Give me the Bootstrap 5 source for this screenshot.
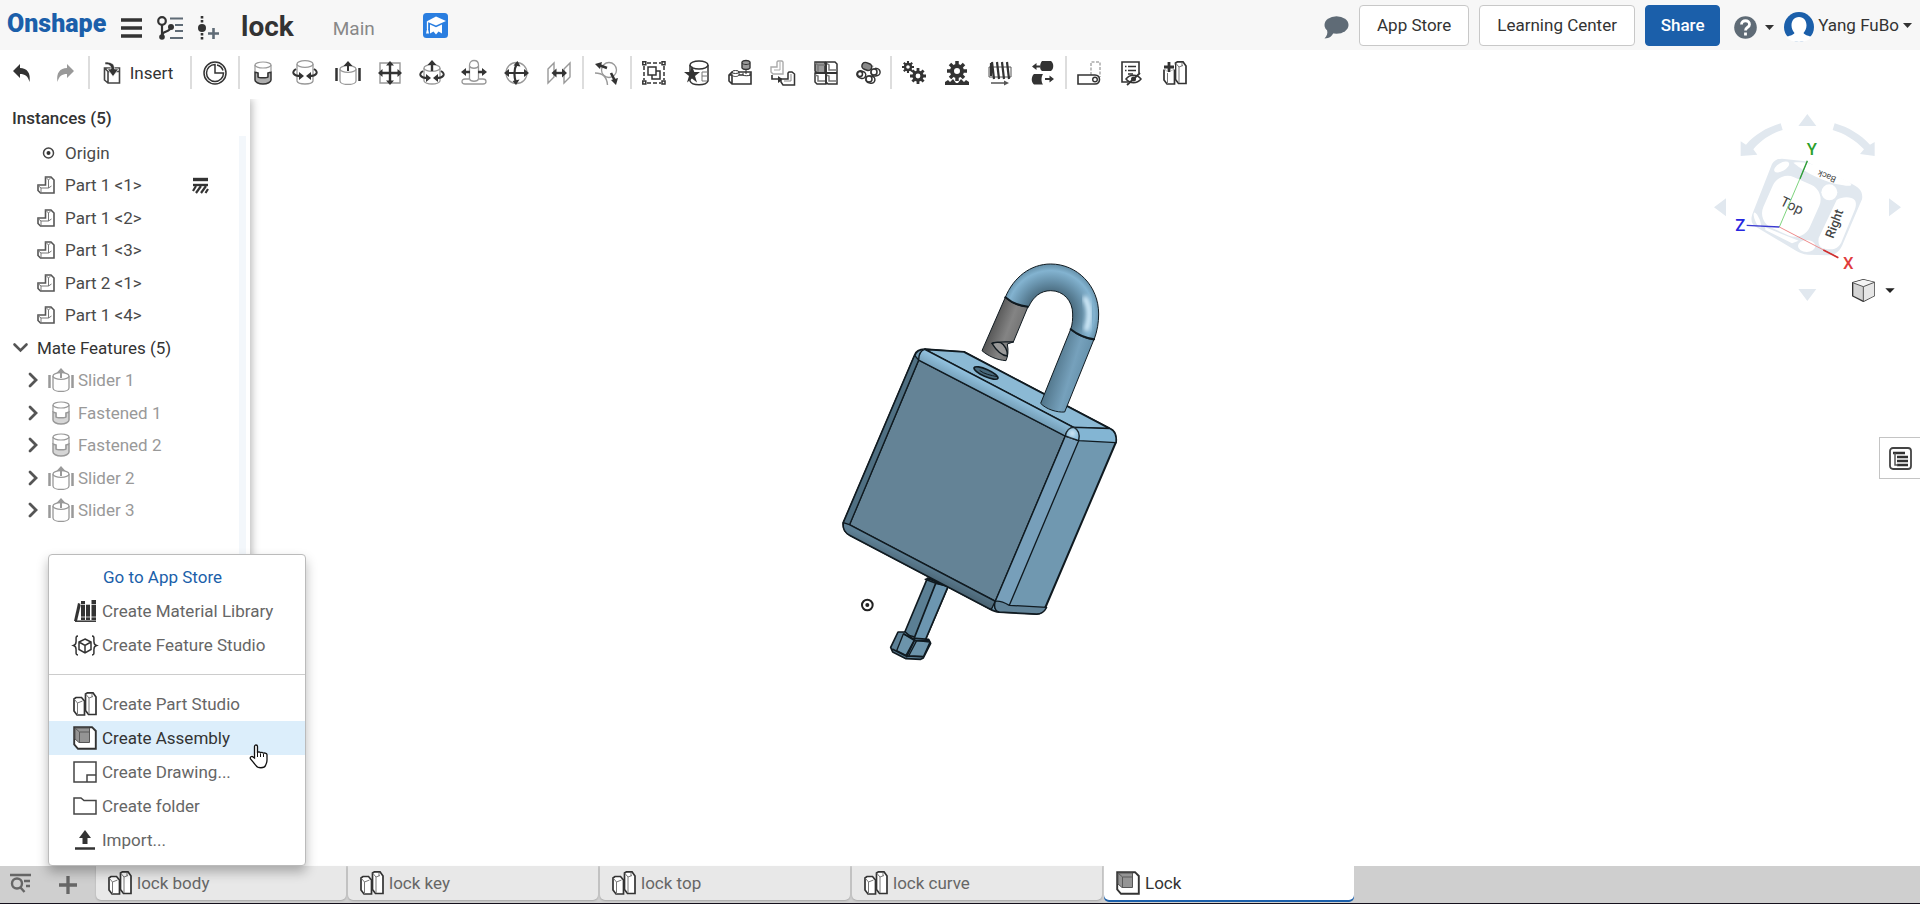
<!DOCTYPE html>
<html lang="en">
<head>
<meta charset="utf-8">
<meta name="viewport" content="width=device-width, initial-scale=1">
<title>lock | Main</title>
<link href="https://cdn.jsdelivr.net/npm/bootstrap@5.3.0/dist/css/bootstrap.min.css" rel="stylesheet">
<style>
  :root { --ink: #333; --steel: #5f6b76; --brand: #1b5faa; --rule: #ddd; }
  body { font-family: Roboto, "Liberation Sans", sans-serif; font-size: 17px; line-height: 24px; color: var(--ink); }
  svg { display: block; flex: none; overflow: visible; }
  button { color: inherit; }
  .plain { border: 0; background: none; padding: 0; }
  .topbar { background: #f7f7f7; height: 50px; padding-left: 7px; }
  .brand { color: var(--brand); font-weight: 900; font-size: 25px; width: 99px; }
  .top-icons { gap: 15px; margin: 0 22px 0 15px; padding-top: 5px; }
  .doc-title { font-size: 28px; font-weight: 700; }
  .doc-branch { font-size: 19px; color: #888; margin-left: 39px; }
  .top-actions { gap: 10px; }
  .top-btn { height: 41px; border: 1px solid #c8c8c8; border-radius: 4px; background: #fff; padding: 0; }
  .top-btn.store { width: 110px; }
  .top-btn.learn { width: 156px; }
  .top-btn.share { width: 75px; background: var(--brand); border-color: var(--brand); color: #fff; font-weight: 500; }
  .tools { height: 49px; padding-bottom: 4px; }
  .tools .split { width: 2px; height: 33px; background: var(--rule); }
  .tool-group { display: flex; }
  .tool-group button { flex: 1; display: flex; justify-content: center; align-items: center; height: 40px; }
  .w-history { width: 88px; } .w-insert { width: 100px; padding-right: 4px; } .w-one { width: 46px; }
  .w-mates { width: 342px; padding: 0 2px; } .w-copies { width: 258px; } .w-relations { width: 173px; } .w-views { width: 130px; }
  .side { width: 250px; background: #fff; box-shadow: 2px 0 8px rgba(0,0,0,.28); clip-path: inset(0 -12px 0 0); z-index: 1; }
  .side-head { font-weight: 500; padding: 6px 12px 0; height: 37px; line-height: 26px; }
  .tree { width: 239px; margin: 0; padding: 0; list-style: none; }
  .tree li { height: 33px; display: flex; align-items: center; color: #4a4a4a; }
  .tree li:nth-child(even) { height: 32px; }
  .tree .leaf { padding-left: 37px; gap: 10px; }
  .tree .pin-mark { margin: 0 31px 0 auto; }
  .tree .head { padding-left: 12px; gap: 8px; color: var(--ink); }
  .tree .mate { padding-left: 26px; gap: 4px; color: #999; }
  .tree .mate .plain { margin-right: 4px; }
  .track { width: 7px; background: #f3f7fb; }
  .scene { position: absolute; inset: 0; width: 100%; height: 100%; }
  .compass { position: absolute; top: 0; right: 0; }
  .panel-btn { position: absolute; right: 0; top: 338px; width: 41px; height: 42px; border: 1px solid #c4c4c4; border-right: 0; background: #fff; display: flex; align-items: center; justify-content: center; padding: 0; }
  .tabbar { background: #cfcfcf; height: 38px; border-bottom: 1px solid #15101c; z-index: 2; }
  .tabbar .tool { width: 48px; height: 34px; display: flex; align-items: center; justify-content: center; }
  .tabs { gap: 2px; }
  .doc-tab { width: 250px; height: 34px; background: #e8e8e8; border-radius: 0 0 5px 5px; color: #666; padding-left: 12px; gap: 5px; display: flex; align-items: center; text-decoration: none; box-shadow: 0 1px 2px rgba(0,0,0,.2); }
  .doc-tab.on { background: #fff; color: var(--ink); box-shadow: 0 2px 0 var(--brand); }
  .create { position: absolute; left: 0; bottom: 100%; width: 258px; background: #fff; border: 1px solid #bbb; border-radius: 4px; padding: 5px 0 8px; box-shadow: 0 6px 12px rgba(0,0,0,.28); }
  .create .row-item { display: flex; align-items: center; width: 100%; height: 34px; padding-left: 24px; gap: 5px; color: #666; text-decoration: none; }
  .create .row-item.store-link { color: var(--brand); padding-left: 54px; }
  .create .row-item.over { background: #dceefb; color: var(--ink); }
  .create hr { margin: 12px 0; border-top: 1px solid #ccc; opacity: 1; }
  .pointer { position: absolute; left: 200px; top: 189px; }
</style>
</head>
<body class="d-flex flex-column vh-100 overflow-hidden">

<svg width="0" height="0" class="position-absolute" aria-hidden="true">
  <defs>
    <symbol id="i-part" viewBox="0 0 18 18"><path d="M8.500 1h5.500l3 3v13H3.500L1 14.500V9h7.500z" fill="#fff" stroke="#555" stroke-width="1.600"/><path d="M8.500 1l3 3v8H4M1 9.500l3 2.500v5M11.500 12l3-2M11.500 4l2-2" fill="none" stroke="#777"/></symbol>
    <symbol id="i-studio" viewBox="0 0 24 24"><path d="M1 7l2-1.500h5.500L11.500 9v14H4l-3-4z" fill="#fff" stroke="#333" stroke-width="1.700"/><path d="M12.500 2l2-1.200h5.500L23 5v17.500h-7.500l-3-4z" fill="#fff" stroke="#333" stroke-width="1.700"/><path d="M1.500 7.500l3 3.500V23M4.500 11l5-2M13 2.500l3 3.500v16M16 6l4-1.500M19 2v3" fill="none" stroke="#777"/></symbol>
    <symbol id="i-assembly" viewBox="0 0 24 24"><path d="M1.200 1.200H19L22.800 5v17.800H5L1.200 18.500z" fill="#fff" stroke="#333" stroke-width="1.900"/><path d="M2 2h14.500v14.500H6L2 13z" fill="#949494" stroke="#555"/><path d="M2 2l4.500 4h10M6.500 6v10" fill="none" stroke="#5a5a5a"/></symbol>
    <symbol id="i-fastened" viewBox="0 0 24 24"><path d="M4 4v15c0 2 3.500 4 8 4s8-2 8-4V4" fill="#fff"/><path d="M4 11.500h4v5h8v-5h4V19c0 2-3.500 4-8 4s-8-2-8-4z" fill="currentColor" fill-opacity=".4"/><path d="M4 11v8c0 2 3.500 4 8 4s8-2 8-4v-8l-3 1v4c-1 1-9 1-10 0v-4z" fill="none" stroke="currentColor" stroke-width="1.500"/><ellipse cx="12" cy="4" rx="8" ry="3" fill="#fff" stroke="#999" stroke-width="1.200"/><path d="M4 4v7M20 4v7" stroke="#999" stroke-width="1.200"/></symbol>
    <symbol id="i-slider" viewBox="0 0 26 24"><path d="M1.500 7v13M24.500 7v13" stroke="currentColor" stroke-width="2.500"/><path d="M5 8v12c0 2 3.500 3.500 8 3.500s8-1.500 8-3.500V8" fill="#fff" stroke="#999" stroke-width="1.300"/><ellipse cx="13" cy="8" rx="8" ry="3.300" fill="#fff" stroke="#999" stroke-width="1.300"/><path d="M13 0l4.500 5H14v5h-2V5H8.500z" fill="currentColor"/></symbol>
    <symbol id="i-right" viewBox="0 0 12 16"><path d="M3 2l6 6-6 6" fill="none" stroke="#555" stroke-width="2.800" stroke-linecap="round"/></symbol>
    <symbol id="i-gear" viewBox="-10 -10 20 20"><circle r="5" fill="none" stroke="#333" stroke-width="4"/><g stroke="#333" stroke-width="3.500"><path d="M0-10v4M0 10V6M-10 0h4M10 0H6M-7-7l3 3M7-7L4-4M-7 7l3-3M7 7L4 4"/></g></symbol>
    <clipPath id="avatar-clip"><path d="M0-2h30v29c-8 4-22 4-30 0z"/></clipPath>
  </defs>
</svg>

<header class="topbar d-flex align-items-center flex-shrink-0">
  <a href="#" class="brand text-decoration-none lh-1 pb-1">Onshape</a>
  <div class="top-icons d-flex align-items-center">
    <button class="plain" aria-label="Menu"><svg width="21" height="20" viewBox="0 0 21 20"><path d="M0 2h21M0 10h21M0 18h21" stroke="#333" stroke-width="3.500"/></svg></button>
    <button class="plain" aria-label="Versions"><svg width="26" height="24" viewBox="0 0 26 24"><g fill="none" stroke="#333" stroke-width="2.200"><circle cx="5" cy="5" r="3.800"/><path d="M5 9v11M5.500 19c0-5 8-2 8-8"/></g><circle cx="5" cy="21" r="2.800" fill="#333"/><circle cx="14" cy="11" r="3" fill="#333"/><path d="M13 2.500h13M18 9h8M18 15h8M13 22h13" stroke="#5f6b76" stroke-width="2"/></svg></button>
    <button class="plain" aria-label="Create version"><svg width="21" height="24" viewBox="0 0 21 24"><circle cx="4" cy="12" r="4" fill="#333"/><path d="M4 0v8M4 17v7" stroke="#333" stroke-width="2.600" stroke-dasharray="2.600 1.400"/><path d="M10 17.500h11M15.500 12v11" stroke="#5f6b76" stroke-width="2.600"/></svg></button>
  </div>
  <span class="doc-title pt-1">lock</span>
  <span class="doc-branch pt-2">Main</span>
  <button class="plain ms-5" aria-label="Education"><svg width="25" height="25" viewBox="0 0 25 25"><rect width="25" height="25" rx="3.500" fill="#2a7ee0"/><path d="M13 3.500l10 4.500-10 4.500L3.500 8.500z" fill="#fff"/><path d="M4.500 9v7" stroke="#fff" stroke-width="1.300"/><path d="M4.500 14l1.500 6.500H3z" fill="#fff"/><path d="M7 11.500l6 2.700 6-2.700v9l-3.500-2-2.500 3-2.500-3-3.500 2z" fill="#fff"/></svg></button>
  <div class="top-actions d-flex align-items-center ms-auto">
    <button class="plain pt-1" aria-label="Comments"><svg width="25" height="23" viewBox="0 0 25 23"><ellipse cx="12.500" cy="9" rx="12" ry="8.700" fill="#5f6b76"/><path d="M3 14c1 3 0 6-2.500 8.500 5 0 8-3 9-6z" fill="#5f6b76"/></svg></button>
    <button class="top-btn store">App Store</button>
    <button class="top-btn learn">Learning Center</button>
    <button class="top-btn share">Share</button>
    <button class="plain d-flex align-items-center gap-2 ps-1 pt-1" aria-label="Help"><svg width="23" height="23" viewBox="0 0 23 23"><circle cx="11.500" cy="11.500" r="11.300" fill="#5f6b76"/><path d="M7.500 8.500c0-5 8-5 8 0 0 3-4 2.500-4 6M11.500 16.500v3" fill="none" stroke="#fff" stroke-width="2.800"/></svg><svg width="9" height="5" viewBox="0 0 9 5"><path d="M0 0h9L4.500 5z" fill="#333"/></svg></button>
    <button class="plain d-flex align-items-center me-2 gap-1" aria-label="Account"><svg width="30" height="30" viewBox="0 0 30 30" class="mt-1"><circle cx="15" cy="15" r="15" fill="#1b5faa" clip-path="url(#avatar-clip)"/><path d="M15 5c5 0 7.500 4 7.500 8.500 0 3-1.500 6-3 7.500 1 2 6 3 8 4-4 6.500-21 6.500-25 0 2-1 7-2 8-4-1.500-1.500-3-4.500-3-7.500C7.500 9 10 5 15 5z" fill="#fff"/></svg><span>Yang FuBo</span><svg width="9" height="5" viewBox="0 0 9 5"><path d="M0 0h9L4.500 5z" fill="#333"/></svg></button>
  </div>
</header>

<div class="tools d-flex align-items-center flex-shrink-0" role="toolbar">
  <div class="tool-group w-history">
    <button class="plain" aria-label="Undo"><svg width="18" height="18" viewBox="0 0 18 18"><path d="M0 7l7-7v4c7 0 11 5 9.500 14C15 12 12 10 7 10v4z" fill="#333"/></svg></button>
    <button class="plain" aria-label="Redo"><svg width="18" height="18" viewBox="0 0 18 18"><path d="M17 7l-7-7v4C3 4-1 9 .5 18 2 12 5 10 10 10v4z" fill="#999"/></svg></button>
  </div>
  <span class="split"></span>
  <div class="tool-group w-insert">
    <button class="plain gap-2"><svg width="19" height="22" viewBox="0 0 19 22"><path d="M1.500 6h15v15H5l-3.500-3zM1.500 6L5 9.500h11M5 9.500V21" fill="#fff" stroke="#444" stroke-width="1.600"/><path d="M2 0c7 0 9.500 2 9.500 7h4L10 14.500 4.500 7H8C8 3.500 6 2 2 2.500z" fill="#333" stroke="#fff" stroke-width=".6"/></svg><span>Insert</span></button>
  </div>
  <span class="split"></span>
  <div class="tool-group w-one">
    <button class="plain" aria-label="Mate connector"><svg width="24" height="24" viewBox="0 0 24 24" fill="none" stroke="#333" stroke-width="1.500"><circle cx="12" cy="12" r="11"/><path d="M12 3.500a8.500 8.500 0 1 0 8.500 8.500H12zM14 4a8 8 0 0 1 6 5.500"/></svg></button>
  </div>
  <span class="split"></span>
  <div class="tool-group w-mates">
    <button class="plain" aria-label="Fastened"><svg width="24" height="24"><use href="#i-fastened"/></svg></button>
    <button class="plain" aria-label="Revolute"><svg width="26" height="25" viewBox="0 0 26 25"><path d="M5 4v17c1 4 15 4 16 0V4" fill="#fff" stroke="#999" stroke-width="1.300"/><ellipse cx="13" cy="4" rx="8" ry="3.300" fill="#fff" stroke="#999" stroke-width="1.300"/><path d="M4 9c-5 3-3 7 5 7M22 9c5 3 3 7-5 7" fill="none" stroke="#333" stroke-width="2"/><path d="M7 12l5 4-5 4zM19 12l-5 4 5 4z" fill="#333"/></svg></button>
    <button class="plain" aria-label="Slider"><svg width="26" height="24"><use href="#i-slider"/></svg></button>
    <button class="plain" aria-label="Planar"><svg width="24" height="24" viewBox="0 0 24 24"><path d="M2 2h20v20H2z" fill="none" stroke="#999" stroke-width="1.400"/><path d="M12 2v20M2 12h20" stroke="#333" stroke-width="2.400"/><path d="M12 0l4 4.500H8zM12 24l4-4.500H8zM0 12l4.500-4v8zM24 12l-4.500-4v8z" fill="#333"/></svg></button>
    <button class="plain" aria-label="Cylindrical"><svg width="26" height="25" viewBox="0 0 26 25"><path d="M5 8v13c2 4 14 4 16 0V8" fill="#fff" stroke="#999" stroke-width="1.300"/><ellipse cx="13" cy="8" rx="8" ry="3.300" fill="#fff" stroke="#999" stroke-width="1.300"/><path d="M4 11c-5 3-3 7 5 7M22 11c5 3 3 7-5 7" fill="none" stroke="#333" stroke-width="2"/><path d="M7 14l5 4-5 4zM19 14l-5 4 5 4zM13 0l4.500 5H14.200v6h-2.400V5H8.500z" fill="#333"/></svg></button>
    <button class="plain" aria-label="Pin slot"><svg width="26" height="25" viewBox="0 0 26 25"><path d="M8.500 19V5c0-6 9-6 9 0v14M8.500 6c1 3 8 3 9 0" fill="none" stroke="#999" stroke-width="1.300"/><path d="M8 19H4c-4 0-4 5 0 5h18c4 0 4-5 0-5h-4.500c-1 3-8 3-9 0" fill="#fff" stroke="#999" stroke-width="1.300"/><path d="M4 12h5M17 12h5" stroke="#333" stroke-width="2.400"/><path d="M0 12l5-4v8zM26 12l-5-4v8z" fill="#333"/></svg></button>
    <button class="plain" aria-label="Ball"><svg width="25" height="24" viewBox="0 0 25 24"><circle cx="12.500" cy="12" r="10.500" fill="none" stroke="#999" stroke-width="1.300"/><path d="M13 2c-3 6-3 14-1 20M2 12h21" stroke="#333" stroke-width="2.200" fill="none"/><path d="M13.500 0l3 5.500-7-1zM12 24l3.500-5.500-7 1.500zM0 12l5-4v8zM25 12l-5-4v8z" fill="#333"/></svg></button>
    <button class="plain" aria-label="Parallel"><svg width="24" height="22" viewBox="0 0 24 22"><path d="M1 7l6-6v14l-6 6zM17 7l6-6v14l-6 6z" fill="none" stroke="#999" stroke-width="1.400"/><path d="M8 11h9" stroke="#333" stroke-width="2.400"/><path d="M4.500 11l5-4.500v9zM20 11l-5-4.500v9z" fill="#333"/></svg></button>
  </div>
  <span class="split"></span>
  <div class="tool-group w-one">
    <button class="plain" aria-label="Tangent"><svg width="24" height="24" viewBox="0 0 24 24"><circle cx="14" cy="9" r="7.500" fill="none" stroke="#999" stroke-width="1.300"/><path d="M0 12c8 0 12 4 12.500 12" fill="none" stroke="#999" stroke-width="1.400"/><path d="M4 4l8 3M16 12l4 8" stroke="#333" stroke-width="2.600"/><path d="M0 3l7-2-2 7zM21 24l-5-5 7-2z" fill="#333"/></svg></button>
  </div>
  <span class="split"></span>
  <div class="tool-group w-copies">
    <button class="plain" aria-label="Group"><svg width="24" height="24" viewBox="0 0 24 24" fill="none" stroke="#333" stroke-width="1.500"><path d="M5 2h14M5 22h14M2 5v14M22 5v14" stroke-dasharray="4 2"/><path d="M.800.800h3v3h-3zM20 .800h3v3h-3zM.800 20h3v3h-3zM20 20h3v3h-3zM6 6h8v8H6zM14 10h4v8h-8v-4"/></svg></button>
    <button class="plain" aria-label="Named position"><svg width="25" height="26" viewBox="0 0 25 26"><path d="M6 5v16c2 5 16 5 18 0V5" fill="#fff" stroke="#333" stroke-width="1.500"/><ellipse cx="15" cy="5" rx="9" ry="4" fill="#fff" stroke="#333" stroke-width="1.500"/><path d="M24 12h-6v4h6M18 16v5h5" stroke="#777" fill="none"/><path d="M8 6l2.300 6H16l-5 4 2 6.500L8 18.500 3 22.500 5 16 0 12h5.800z" fill="#333"/></svg></button>
    <button class="plain" aria-label="Insert into"><svg width="24" height="26" viewBox="0 0 24 26"><path d="M1 15l3-3h19v12H4l-3-3zM1 15h22M4 15v9" fill="#fff" stroke="#333" stroke-width="1.600"/><path d="M4 12v3c1 2 6 2 7 0v-3M15 13v2c1 1 6 1 7 0v-2" fill="#fff" stroke="#333"/><ellipse cx="7.500" cy="12" rx="3.500" ry="1.500" fill="#fff" stroke="#333"/><path d="M14 2v6c1 2 7 2 8 0V2c-1-2-7-2-8 0z" fill="#999" stroke="#333" stroke-width="1.400"/><path d="M14 3c1 2 7 2 8 0M18 10v4" fill="none" stroke="#333"/></svg></button>
    <button class="plain" aria-label="Replicate"><svg width="25" height="26" viewBox="0 0 25 26"><path d="M8 1h4l1 1v12H3l-2-2V7h6V2z" fill="#fff" stroke="#aaa" stroke-width="1.400"/><path d="M10 2v8H4" fill="none" stroke="#aaa"/><path d="M2 15v4h7" fill="none" stroke="#333" stroke-width="1.600"/><path d="M8 16l5 3.500L8 23z" fill="#333"/><path d="M19 12h3l2.500 2v11H13l-2-3v-3h7v-6z" fill="#fff" stroke="#333" stroke-width="1.500"/><path d="M21 14v7h-7" fill="none" stroke="#888"/></svg></button>
    <button class="plain" aria-label="Linear pattern"><svg width="24" height="24" viewBox="0 0 24 24" stroke="#333" stroke-width="1.500"><path d="M1 1h10v11H3l-2-2z" fill="#999"/><path d="M12 1h9l2 2v9H12zM1 12h11v11H3l-2-2zM12 12h11v11H14l-2-2z" fill="#fff"/><path d="M1 2l3 2h7M4 4v8M12 2l3 2v5h8M1 14l3 1v5h8M12 14l3 1v5h8" fill="none" stroke="#777"/><path d="M12 1v22M1 12h22" stroke-width="1.800"/></svg></button>
    <button class="plain" aria-label="Circular pattern"><svg width="25" height="24" viewBox="0 0 25 24" fill="#fff" stroke="#333" stroke-width="1.500"><path d="M3 15l2-6M12 3l8 4" stroke="#aaa" stroke-dasharray="2 2"/><rect x="6" y="2" width="10" height="7" rx="3.500" fill="#888" transform="rotate(20 11 5)"/><rect x="15" y="8" width="9" height="7" rx="3.500" transform="rotate(-15 19 11)"/><rect x="1" y="10" width="9" height="7" rx="3.500" transform="rotate(20 5 13)"/><rect x="10" y="15" width="9" height="7" rx="3.500" transform="rotate(10 14 18)"/><circle cx="13" cy="18" r="3"/><circle cx="18" cy="11" r="3"/><circle cx="4" cy="13" r="2.500"/></svg></button>
  </div>
  <span class="split"></span>
  <div class="tool-group w-relations">
    <button class="plain" aria-label="Gear relation"><svg width="24" height="24" viewBox="0 0 24 24"><use href="#i-gear" x="0" y="0" width="12" height="12"/><use href="#i-gear" x="8" y="7" width="16" height="16"/></svg></button>
    <button class="plain" aria-label="Rack and pinion"><svg width="24" height="24" viewBox="0 0 24 24"><use href="#i-gear" x="2" y="0" width="20" height="20"/><path d="M0 24v-3l3-2 2 2 3-3 3 4h2l3-4 3 3 2-2 3 2v3z" fill="#333"/></svg></button>
    <button class="plain" aria-label="Screw relation"><svg width="24" height="24" viewBox="0 0 24 24"><path d="M1 6h22v10H1z" fill="#fff" stroke="#555"/><path d="M4 1l2 17M9 1l2 17M14 1l2 17M19 1l2 17M3 2v13" stroke="#333" stroke-width="2.200"/><path d="M3 22h15" stroke="#555" stroke-width="1.500"/><path d="M16 19.500l5 2.500-5 2.500z" fill="#555"/></svg></button>
    <button class="plain" aria-label="Linear relation"><svg width="22" height="24" viewBox="0 0 22 24"><path d="M10 0h9c3 2 3 8 0 10h-9c-3-2-2-8 0-10zM2 13h9c-2 3-2 8 0 10.500H2c-3-2-3-8 0-10.500z" fill="#333"/><path d="M3 5.500h5M13 18h5" stroke="#333" stroke-width="1.800"/><path d="M0 5.500L4.500 2v7zM22 18l-4.500-3.500v7z" fill="#333"/></svg></button>
  </div>
  <span class="split"></span>
  <div class="tool-group w-views">
    <button class="plain" aria-label="Animate"><svg width="24" height="24" viewBox="0 0 24 24"><path d="M14 14V1h9v15" fill="none" stroke="#aaa" stroke-width="1.500" stroke-dasharray="3 1.500"/><path d="M1 14h17c6 0 6 9 0 9H1z" fill="#fff" stroke="#333" stroke-width="1.600"/><circle cx="18" cy="18.500" r="2.300" fill="none" stroke="#333" stroke-width="1.400"/></svg></button>
    <button class="plain" aria-label="Display states"><svg width="21" height="24" viewBox="0 0 21 24"><path d="M7 21H1V1h17v11" fill="none" stroke="#333" stroke-width="1.600"/><path d="M7 5.500h8M7 9.500h8M7 13h5M4 5.500h1.500M4 9.500h1.500" stroke="#333" stroke-width="1.500"/><path d="M5 18c4-5 11-5 15 0-4 5-11 5-15 0z" fill="#fff" stroke="#333" stroke-width="1.500"/><circle cx="12.500" cy="18" r="2.500" fill="#333"/><path d="M19 12L6 24" stroke="#333" stroke-width="1.800"/></svg></button>
    <button class="plain" aria-label="Create part in context"><svg width="24" height="24" viewBox="0 0 24 24"><use href="#i-studio"/><path d="M6 0v12M0 6h12" stroke="#fff" stroke-width="5"/><path d="M6 1v10M1 6h10" stroke="#333" stroke-width="2.800"/></svg></button>
  </div>
</div>

<main class="position-relative d-flex flex-grow-1">
  <svg class="scene" viewBox="0 99 1920 767" role="img" aria-label="Padlock assembly">
    <defs>
      <linearGradient id="leg" x1="690" y1="390" x2="790" y2="420" gradientUnits="userSpaceOnUse"><stop offset="0" stop-color="#4f7388"/><stop offset=".6" stop-color="#76a1bc"/><stop offset="1" stop-color="#6590aa"/></linearGradient>
      <linearGradient id="tip" x1="520" y1="240" x2="600" y2="270" gradientUnits="userSpaceOnUse"><stop offset="0" stop-color="#555"/><stop offset=".6" stop-color="#848484"/><stop offset="1" stop-color="#747474"/></linearGradient>
      <linearGradient id="rim" x1="530" y1="440" x2="505" y2="490" gradientUnits="userSpaceOnUse"><stop offset="0" stop-color="#92c2df"/><stop offset="1" stop-color="#668da4"/></linearGradient>
      <linearGradient id="low" x1="300" y1="960" x2="280" y2="1005" gradientUnits="userSpaceOnUse"><stop offset="0" stop-color="#5f8196"/><stop offset="1" stop-color="#47606f"/></linearGradient>
      <radialGradient id="bow" cx="692" cy="222" r="148" gradientUnits="userSpaceOnUse"><stop offset=".46" stop-color="#4c6e82"/><stop offset=".7" stop-color="#6b96b0"/><stop offset=".88" stop-color="#83b3d0"/><stop offset="1" stop-color="#6691aa"/></radialGradient>
      <filter id="soft" x="-80%" y="-50%" width="260%" height="200%"><feGaussianBlur stdDeviation="7"/></filter>
    </defs>
    <g transform="translate(820 240) scale(.33333)" stroke="#101a20" stroke-width="5" stroke-linejoin="round" stroke-linecap="round">
      <path d="M322 1015L252 1182 316 1200 384 1040z" fill="#5b7f94"/>
      <path d="M348 1028L282 1196 316 1200 384 1040z" fill="#6c96b0"/>
      <path d="M316 1018l32 12 36 8M322 1015l60 12" fill="none"/>
      <path d="M234 1176l22 0 20 18 50 4 6 12-22 44-8 4-44-2-40-20-6-14z" fill="#5d8197"/>
      <path d="M250 1182l-20 50 28 14 26-48zM290 1202l-24 46 44 2 20-44z" fill="#6c94ab" stroke-width="4"/>
      <path d="M252 1182l32 20 42 0M218 1228l40 20 50 2M284 1200l-24 50" fill="none"/>
      <path d="M284 346c4-12 16-18 30-18l118 8L870 566c14 6 20 20 18 40L678 1098c-6 14-14 24-28 24l-112-6c-10 0-20-4-30-10L90 886c-14-8-22-22-20-38z" fill="#7098b0" stroke-width="6"/>
      <path d="M296 360L736 588 526 1084 88 854z" fill="#648396"/>
      <path d="M284 346L70 848c0 6 8 6 18 8L296 360z" fill="#4f6f82" stroke-width="4"/>
      <path d="M70 848c-2 18 6 32 20 38l418 220c10 6 10-12 18-22L88 854z" fill="url(#low)" stroke-width="4"/>
      <path d="M314 328l118 8 438 230-110-4z" fill="#8bb9d4"/>
      <path d="M314 328L760 562c-14 4-22 14-24 26L296 360c0-16 6-28 18-32z" fill="url(#rim)" stroke-width="4"/>
      <path d="M760 562l110 4c14 6 20 20 18 42l-112-6z" fill="#83b5d3" stroke-width="4"/>
      <path d="M736 588l40 14L568 1096c-6 14-18 20-30 20-14-4-16-18-12-32z" fill="#779fba" stroke-width="4"/>
      <path d="M526 1084c12-2 28 4 42 12l112 6c-6 12-14 20-30 20l-112-6c-14-4-16-18-12-32z" fill="#628499" stroke-width="4"/>
      <path d="M736 588c4-18 14-26 26-26 14 8 18 24 14 40z" fill="#8fc0dd" stroke-width="4"/>
      <circle cx="757" cy="580" r="9" fill="#e8f6ff" stroke="none" filter="url(#soft)"/>
      <ellipse cx="498" cy="399" rx="39" ry="11" transform="rotate(24 498 399)" fill="#48697c"/>
      <path d="M480 392c12 10 32 14 52 18" fill="none" stroke-width="3"/>
      <path d="M752 268L662 490c16 18 50 28 72 26L822 298z" fill="url(#leg)" stroke-width="3"/>
      <path d="M556 172c24-60 76-100 136-100 80 0 144 66 144 150 0 26-4 50-14 78-26-4-50-14-70-32 6-18 6-30 6-46 0-40-28-70-66-70-30 0-52 18-66 48-24 0-54-10-70-28z" fill="url(#bow)" stroke-width="3"/>
      <path d="M796 176c14 26 14 60 4 90" fill="none" stroke="#d9f1ff" stroke-width="16" filter="url(#soft)"/>
      <path d="M556 172L486 332c18 16 44 28 72 30 6-14 8-28 4-50l18-6 44-106c-22 0-50-10-68-28z" fill="url(#tip)" stroke-width="3"/>
      <path d="M516 310c12 20 30 36 46 38 2-16-8-34-20-40-10-2-20 0-26 2z" fill="#999" stroke-width="4"/>
      <path d="M516 310c10-6 40-4 64-4" fill="none" stroke-width="4"/>
      <path d="M752 268c20 16 46 26 70 30M556 172c18 16 44 26 68 28" fill="none" stroke-width="6"/>
      <circle cx="142" cy="1095" r="16" fill="#fff" stroke="#222" stroke-width="6"/><circle cx="142" cy="1095" r="6" fill="#222" stroke="none"/>
    </g>
  </svg>

  <aside class="side position-relative d-flex flex-column">
    <div class="side-head">Instances (5)</div>
    <div class="d-flex flex-grow-1">
      <ul class="tree">
        <li class="leaf"><svg width="18" height="12" viewBox="0 0 18 12"><circle cx="11.500" cy="6" r="5" fill="none" stroke="#444" stroke-width="1.500"/><circle cx="11.500" cy="6" r="2" fill="#333"/></svg>Origin</li>
        <li class="leaf"><svg width="18" height="18"><use href="#i-part"/></svg>Part 1 &lt;1&gt;<svg class="pin-mark" width="15" height="15" viewBox="0 0 15 15" role="img" aria-label="Fixed"><path d="M0 1.500h15" stroke="#333" stroke-width="3.400"/><path d="M0 7h15" stroke="#333" stroke-width="2.400"/><path d="M0 13l3-5M3 15l5-7M8 15l5-7M12.500 15l2.500-4" stroke="#333" stroke-width="2.200"/></svg></li>
        <li class="leaf"><svg width="18" height="18"><use href="#i-part"/></svg>Part 1 &lt;2&gt;</li>
        <li class="leaf"><svg width="18" height="18"><use href="#i-part"/></svg>Part 1 &lt;3&gt;</li>
        <li class="leaf"><svg width="18" height="18"><use href="#i-part"/></svg>Part 2 &lt;1&gt;</li>
        <li class="leaf"><svg width="18" height="18"><use href="#i-part"/></svg>Part 1 &lt;4&gt;</li>
        <li class="head"><button class="plain" aria-label="Collapse"><svg width="17" height="12" viewBox="0 0 17 12"><path d="M2.500 2.500l6 6 6-6" fill="none" stroke="#555" stroke-width="2.600" stroke-linecap="round"/></svg></button>Mate Features (5)</li>
        <li class="mate"><button class="plain" aria-label="Expand"><svg width="14" height="16"><use href="#i-right"/></svg></button><svg width="26" height="24"><use href="#i-slider"/></svg>Slider 1</li>
        <li class="mate"><button class="plain" aria-label="Expand"><svg width="14" height="16"><use href="#i-right"/></svg></button><svg width="26" height="24"><use href="#i-fastened"/></svg>Fastened 1</li>
        <li class="mate"><button class="plain" aria-label="Expand"><svg width="14" height="16"><use href="#i-right"/></svg></button><svg width="26" height="24"><use href="#i-fastened"/></svg>Fastened 2</li>
        <li class="mate"><button class="plain" aria-label="Expand"><svg width="14" height="16"><use href="#i-right"/></svg></button><svg width="26" height="24"><use href="#i-slider"/></svg>Slider 2</li>
        <li class="mate"><button class="plain" aria-label="Expand"><svg width="14" height="16"><use href="#i-right"/></svg></button><svg width="26" height="24"><use href="#i-slider"/></svg>Slider 3</li>
      </ul>
      <div class="track"></div>
    </div>
  </aside>

  <svg class="compass" width="230" height="221" viewBox="0 27 690 663" role="img" aria-label="View cube">
    <g fill="#e1e8ef"><path d="M352 72l27 36h-54zM352 633l27-36h-54zM72 352l36-27v54zM633 352l-36-27v54z"/>
      <path d="M272 100l6 20c-34 10-64 30-88 58l12 16-50 4 0-44 16 10c26-30 62-52 104-64zM434 100l-6 20c34 10 68 30 94 58l-12 14 44 6 0-42-14 8c-28-30-64-52-106-64z"/>
      <path d="M246 222c6-10 16-16 30-16l70 8 140 68c22 10 34 24 30 46l-56 130c-8 24-24 38-46 38l-60-2c-16-2-24-6-36-12L200 412c-14-8-20-20-12-42z"/></g>
    <g fill="#fff"><rect x="228" y="266" width="152" height="166" rx="48" transform="rotate(24 304 349)"/><path d="M440 330c14-10 44-12 54 0 6 8 4 20 0 30l-38 92c-6 16-16 26-34 26-26 0-40-6-36-34z"/><circle cx="418" cy="307" r="24"/><ellipse cx="350" cy="468" rx="26" ry="18"/><ellipse cx="275" cy="231" rx="25" ry="12" transform="rotate(-30 275 231)"/><path d="M310 218c20-4 50 0 80 14l90 46c10 8 0 12-20 8-60-10-110-36-150-68z"/><ellipse cx="202" cy="390" rx="7" ry="24" transform="rotate(-22 202 390)"/><path d="M226 412l100 40-20 8-80-40z"/></g>
    <g font-family="Roboto, sans-serif" fill="#444"><text x="268" y="344" font-size="42" transform="rotate(26 268 344)">Top</text><text x="430" y="447" font-size="38" font-weight="500" transform="rotate(-70 430 447)">Right</text><text x="440" y="262" font-size="26" transform="rotate(203 440 262)">Back</text></g>
    <path d="M268 411L352 214" stroke="#7ed47e" stroke-width="3"/><path d="M330 266L352 212" stroke="#2f9b3a" stroke-width="4"/>
    <path d="M268 411L445 503" stroke="#ee8c8c" stroke-width="3"/><path d="M400 480L445 503" stroke="#cf2f2f" stroke-width="5"/>
    <path d="M268 411L170 406" stroke="#3a3ad0" stroke-width="4"/>
    <g font-family="Roboto, sans-serif" font-size="50" font-weight="500"><text x="350" y="195" fill="#2ca02c">Y</text><text x="459" y="538" fill="#e03c3c">X</text><text x="136" y="423" fill="#2727e0">Z</text></g>
    <path d="M488 578l32-9 33 8v40l-33 17-32-16z" fill="#d4d4d4" stroke="#333" stroke-width="4" stroke-linejoin="round"/><path d="M488 578l32 12 33-13-33-8z" fill="#f4f4f4"/><path d="M520 590l33-13v40l-33 17z" fill="#e6e6e6"/><path d="M488 578l32 12 33-13M520 590v44" fill="none" stroke="#555" stroke-width="3"/>
    <path d="M586 595h28l-14 14z" fill="#222"/>
  </svg>

  <button class="panel-btn" aria-label="Configuration panel"><svg width="23" height="23" viewBox="0 0 23 23"><rect x="1" y="1" width="21" height="21" rx="3" fill="none" stroke="#444" stroke-width="1.800"/><path d="M4 6h12M8 10h11M8 14h11M8 18h11" stroke="#333" stroke-width="2.300"/><path d="M6 6v12h3" fill="none" stroke="#555" stroke-width="1.500"/></svg></button>
</main>

<footer class="tabbar position-relative d-flex flex-shrink-0">
  <button class="plain tool pe-2" aria-label="Search tabs"><svg width="21" height="20" viewBox="0 0 21 20" fill="none" stroke="#666" stroke-width="2.400"><path d="M0 2h21M14 8h6M16 13h4"/><circle cx="7" cy="10.500" r="5"/><path d="M10.500 14.500l4 4.500"/></svg></button>
  <div class="position-relative">
    <button class="plain tool pe-2 pt-1" aria-label="New tab"><svg width="18" height="18" viewBox="0 0 18 18"><path d="M0 9h18M9 0v18" stroke="#666" stroke-width="3.300"/></svg></button>
    <div class="create">
      <a href="#" class="row-item store-link">Go to App Store</a>
      <button class="plain row-item"><svg width="24" height="22" viewBox="0 0 24 22"><path d="M5 3l3 1-4 17H1z" fill="#333"/><path d="M8 1h4v19H8zM13 4h4v16h-4zM18.500 0h4.500v20h-4.500z" fill="#333"/><path d="M7 4.500h16M7 17h16" stroke="#fff" stroke-width=".7"/><path d="M2 21.200h21" stroke="#333" stroke-width="1.500"/></svg>Create Material Library</button>
      <button class="plain row-item"><svg width="24" height="21" viewBox="0 0 24 21" fill="none" stroke="#333" stroke-width="1.500"><path d="M5 1C2 1 3.500 4 3 7c0 2-1 3-2.500 3.500C2 11 3 12 3 14c.5 3-1 6 2 6M19 1c3 0 1.500 3 2 6 0 2 1 3 2.500 3.500C22 11 21 12 21 14c-.5 3 1 6-2 6M12 4l6 3v7.500L12 18l-6-3.500V7zM6 7l6 3.500L18 7M12 10.500V18"/></svg>Create Feature Studio</button>
      <hr>
      <button class="plain row-item"><svg width="24" height="24"><use href="#i-studio"/></svg>Create Part Studio</button>
      <button class="plain row-item over"><svg width="24" height="24"><use href="#i-assembly"/></svg>Create Assembly</button>
      <button class="plain row-item"><svg width="24" height="22" viewBox="0 0 24 22"><path d="M1 1h22v20H1zM14 21v-7h9" fill="none" stroke="#444" stroke-width="1.500"/></svg>Create Drawing...</button>
      <button class="plain row-item"><svg width="24" height="18" viewBox="0 0 24 18"><path d="M1 17V1h7l3 2.500h12V17z" fill="none" stroke="#444" stroke-width="1.500"/></svg>Create folder</button>
      <button class="plain row-item"><svg width="24" height="20" viewBox="0 0 24 20"><path d="M12 0l6 8h-3.500v6h-5V8H6z" fill="#333"/><path d="M2 18.500h20" stroke="#333" stroke-width="2.500"/></svg>Import...</button>
      <svg class="pointer" width="19" height="25" viewBox="0 0 19 25"><path d="M5.500 14V2.500c0-2 3-2 3 0V9c0-1.500 3-1.500 3 .3 0-1.500 3-1.300 3 .5 0-1.300 3.500-1 3.500 1V16c0 3-1 4-1.500 5.500-1 3-8 3-9.500 0L1.500 15c-1-2 1.500-3.500 2.500-2z" fill="#fff" stroke="#111" stroke-width="1.300"/><path d="M8.500 9v4M11.500 9.500V13M14.500 10v3" stroke="#111"/></svg>
    </div>
  </div>
  <nav class="tabs d-flex">
    <a href="#" class="doc-tab"><svg width="24" height="24"><use href="#i-studio"/></svg>lock body</a>
    <a href="#" class="doc-tab"><svg width="24" height="24"><use href="#i-studio"/></svg>lock key</a>
    <a href="#" class="doc-tab"><svg width="24" height="24"><use href="#i-studio"/></svg>lock top</a>
    <a href="#" class="doc-tab"><svg width="24" height="24"><use href="#i-studio"/></svg>lock curve</a>
    <a href="#" class="doc-tab on" aria-current="page"><svg width="24" height="24"><use href="#i-assembly"/></svg>Lock</a>
  </nav>
</footer>
<script src="https://cdn.jsdelivr.net/npm/bootstrap@5.3.0/dist/js/bootstrap.bundle.min.js"></script>
</body>
</html>
